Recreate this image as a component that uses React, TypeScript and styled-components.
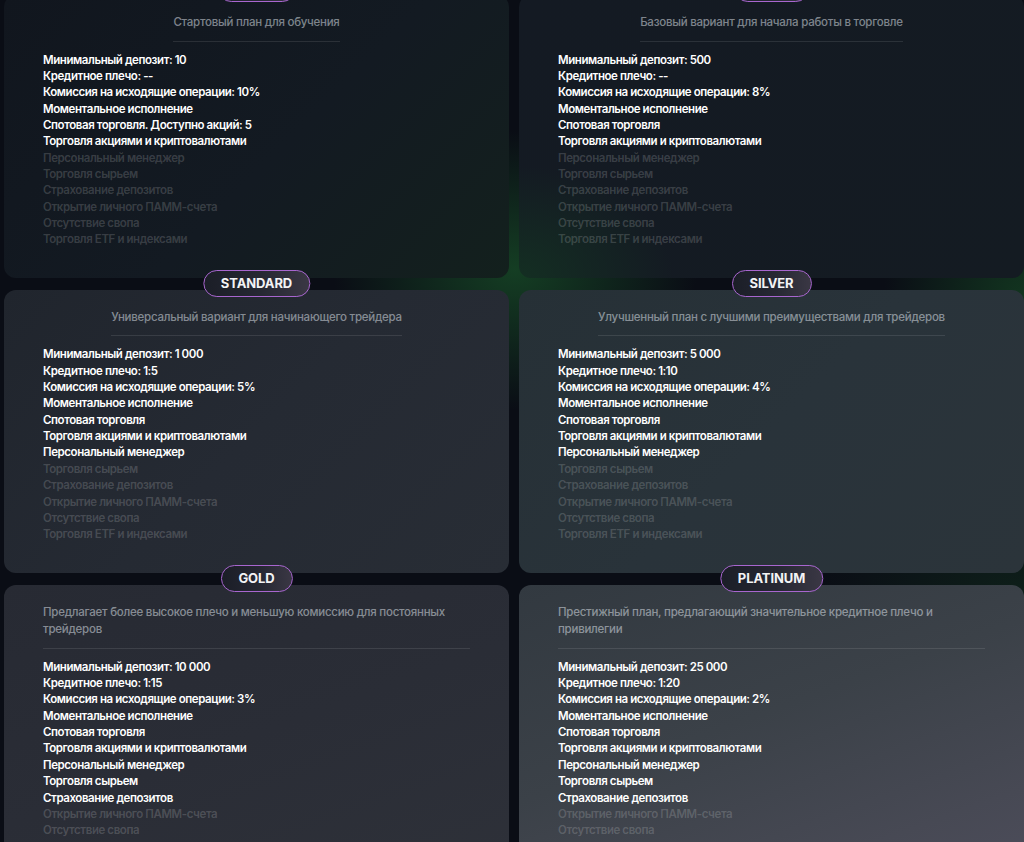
import React from "react";
import styled, { createGlobalStyle } from "styled-components";

const GlobalStyle = createGlobalStyle`
  html, body {
    margin: 0;
    padding: 0;
    background: #0a0d15;
  }
  body {
    font-family: "Inter", "Noto Sans", sans-serif;
    color: #fff;
    overflow: hidden;
    min-height: 842px;
    background:
      radial-gradient(ellipse 260px 200px at 515px 270px, rgba(24, 78, 40, 0.75), transparent 70%),
      radial-gradient(ellipse 200px 260px at 1024px 300px, rgba(22, 70, 36, 0.7), transparent 70%),
      radial-gradient(ellipse 300px 200px at 1024px 600px, rgba(18, 50, 30, 0.5), transparent 70%),
      #0a0d15;
  }
`;

type Plan = {
  name: string;
  description: string;
  features: { text: string; on: boolean }[];
  bg: string;
};

const Page = styled.main`
  display: grid;
  grid-template-columns: repeat(2, 1fr);
  column-gap: 10px;
  row-gap: 12px;
  padding: 0 0 0 4px;
  margin-top: -5px;
`;

const Card = styled.section<{ $bg: string }>`
  position: relative;
  display: flex;
  flex-direction: column;
  align-items: center;
  padding: 19px 39px 30px;
  border-radius: 12px;
  background: ${(p) => p.$bg};
`;

const Badge = styled.div`
  position: absolute;
  top: -20px;
  left: 50%;
  transform: translateX(-50%);
  height: 27px;
  box-sizing: border-box;
  padding: 0 17px;
  display: flex;
  align-items: center;
  border: 1.5px solid #a866cf;
  border-radius: 14px;
  background: linear-gradient(90deg, #1b1e27 0%, #262833 55%, #3a3744 100%);
  font-size: 13px;
  font-weight: 700;
  letter-spacing: -0.1px;
  color: #f3f3f5;
  white-space: nowrap;
`;

const Description = styled.p`
  display: inline-block;
  max-width: 100%;
  box-sizing: border-box;
  margin: 0;
  padding-bottom: 9px;
  border-bottom: 1px solid rgba(255, 255, 255, 0.1);
  font-size: 11.5px;
  line-height: 17.5px;
  font-weight: 500;
  letter-spacing: -0.25px;
  color: rgba(220, 225, 232, 0.55);
  text-align: left;
`;

const FeatureList = styled.ul`
  align-self: stretch;
  list-style: none;
  margin: 10px 0 0;
  padding: 0;
`;

const Feature = styled.li<{ $on: boolean }>`
  font-size: 11.5px;
  line-height: 16.36px;
  font-weight: 600;
  letter-spacing: -0.42px;
  white-space: nowrap;
  color: ${(p) => (p.$on ? "#ffffff" : "rgba(255, 255, 255, 0.17)")};
`;

const tail = [
  "Торговля сырьем",
  "Страхование депозитов",
  "Открытие личного ПАММ-счета",
  "Отсутствие свопа",
  "Торговля ETF и индексами",
];

function build(
  dep: string,
  lev: string,
  fee: string,
  spot: string,
  enabledCount: number
) {
  const list = [
    `Минимальный депозит: ${dep}`,
    `Кредитное плечо: ${lev}`,
    `Комиссия на исходящие операции: ${fee}`,
    "Моментальное исполнение",
    spot,
    "Торговля акциями и криптовалютами",
    "Персональный менеджер",
    ...tail,
  ];
  return list.map((text, i) => ({ text, on: i < enabledCount }));
}

const plans: Plan[] = [
  {
    name: "START",
    description: "Стартовый план для обучения",
    features: build("10", "--", "10%", "Спотовая торговля. Доступно акций: 5", 6),
    bg: "linear-gradient(135deg, #11161e 0%, #131a22 55%, #13201d 100%)",
  },
  {
    name: "BASIC",
    description: "Базовый вариант для начала работы в торговле",
    features: build("500", "--", "8%", "Спотовая торговля", 6),
    bg: "radial-gradient(ellipse 220px 160px at 0% 100%, rgba(20, 60, 34, 0.6), transparent 70%), linear-gradient(135deg, #141a23 0%, #141b22 100%)",
  },
  {
    name: "STANDARD",
    description: "Универсальный вариант для начинающего трейдера",
    features: build("1 000", "1:5", "5%", "Спотовая торговля", 7),
    bg: "linear-gradient(135deg, #20252d 0%, #252a33 50%, #282d35 100%)",
  },
  {
    name: "SILVER",
    description: "Улучшенный план с лучшими преимуществами для трейдеров",
    features: build("5 000", "1:10", "4%", "Спотовая торговля", 7),
    bg: "linear-gradient(135deg, #263036 0%, #29333a 50%, #2b343a 100%)",
  },
  {
    name: "GOLD",
    description:
      "Предлагает более высокое плечо и меньшую комиссию для постоянных трейдеров",
    features: build("10 000", "1:15", "3%", "Спотовая торговля", 9),
    bg: "linear-gradient(160deg, #272a33 0%, #2a2d36 50%, #2e3139 100%)",
  },
  {
    name: "PLATINUM",
    description:
      "Престижный план, предлагающий значительное кредитное плечо и привилегии",
    features: build("25 000", "1:20", "2%", "Спотовая торговля", 9),
    bg: "linear-gradient(160deg, #323940 0%, #3b4148 45%, #474954 80%, #4d4d5b 100%)",
  },
];

export default function App() {
  return (
    <>
      <GlobalStyle />
      <Page>
        {plans.map((plan) => (
          <Card key={plan.name} $bg={plan.bg}>
            <Badge>{plan.name}</Badge>
            <Description>{plan.description}</Description>
            <FeatureList>
              {plan.features.map((f) => (
                <Feature key={f.text} $on={f.on}>
                  {f.text}
                </Feature>
              ))}
            </FeatureList>
          </Card>
        ))}
      </Page>
    </>
  );
}
